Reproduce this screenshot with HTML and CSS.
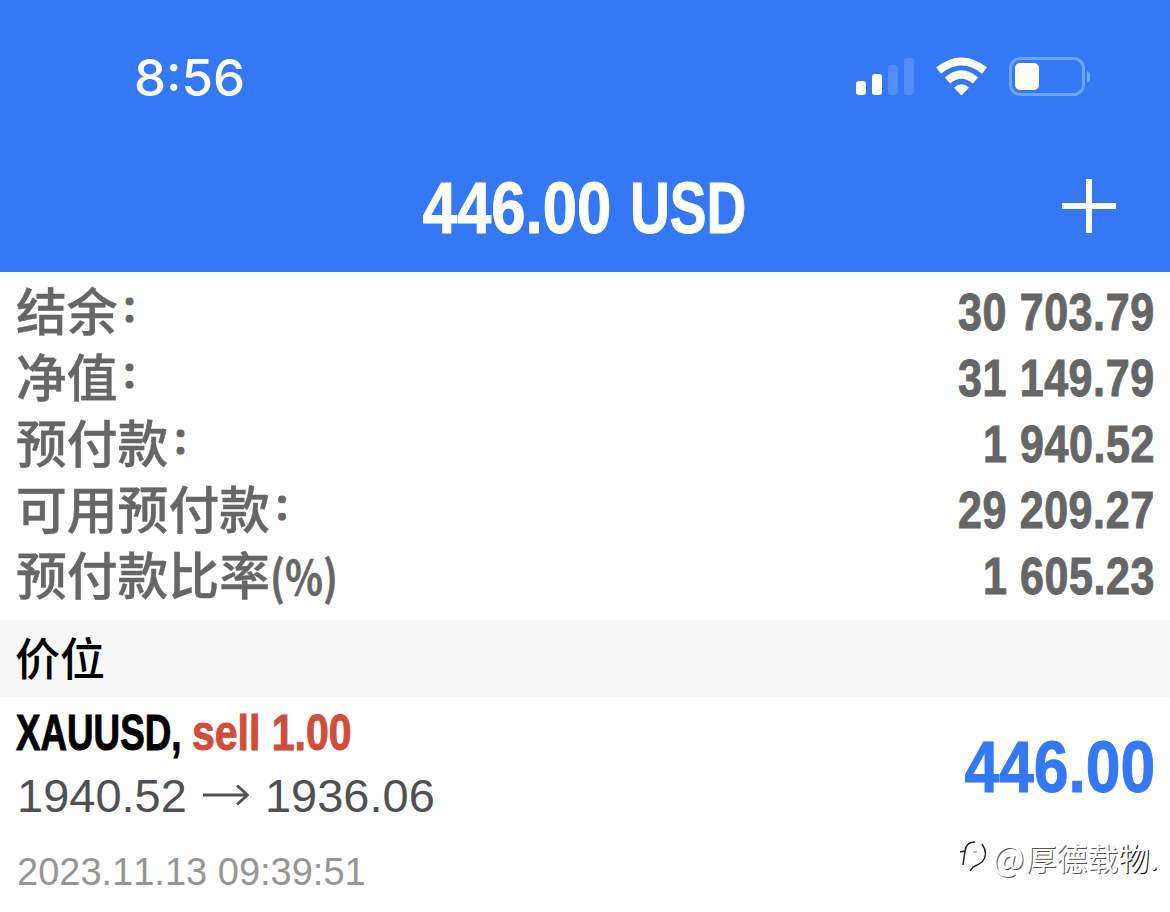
FILE: index.html
```html
<!DOCTYPE html>
<html lang="zh-CN">
<head>
    <meta charset="UTF-8">
    <meta name="viewport" content="width=device-width, initial-scale=1.0">
    <title>446.00 USD</title>
    <link rel="stylesheet" href="styles.css">
</head>
<body>
    <header class="header">
        <div class="status-bar">
            <span class="time">8:56</span>
            <svg class="status-icons" width="240" height="50" viewBox="0 0 240 50">
                <!-- signal -->
                <g fill="#fff">
                    <rect x="6" y="31" width="10" height="14" rx="3"/>
                    <rect x="22" y="24" width="10" height="21" rx="3"/>
                    <rect x="38" y="15" width="10" height="30" rx="3" opacity=".15"/>
                    <rect x="54" y="8" width="10" height="37" rx="3" opacity=".15"/>
                </g>
                <!-- wifi -->
                <g fill="none" stroke="#fff">
                    <path d="M88.500 20.500 Q111.500 2.500 134.500 20.500" stroke-width="8"/>
                    <path d="M97.500 30.500 Q111.500 18.500 125.500 30.500" stroke-width="8"/>
                </g>
                <path d="M104 37.500 Q111.500 31 119 37.500 L112.500 44.500 Q111.500 45.500 110.500 44.500 Z" fill="#fff"/>
                <!-- battery -->
                <rect x="160.500" y="8.500" width="73" height="36" rx="10" fill="none" stroke="#8fc4ff" stroke-width="3" opacity=".6"/>
                <rect x="165" y="13" width="24" height="27" rx="5" fill="#fff"/>
                <path d="M237 21 Q241 23 241 27 Q241 31 237 33 Z" fill="#8fc4ff" opacity=".7"/>
            </svg>
        </div>
        <div class="title-bar">
            <h1 class="title"><span class="amount">446.00</span> <span class="currency">USD</span></h1>
            <svg class="add" width="54" height="54" viewBox="0 0 54 54">
                <path d="M27 0V54M0 27H54" stroke="#fff" stroke-width="6"/>
            </svg>
        </div>
    </header>
    <main>
        <div class="summary">
            <div class="row"><span class="label">结余<span class="colon">：</span></span><span class="value">30 703.79</span></div>
            <div class="row"><span class="label">净值<span class="colon">：</span></span><span class="value">31 149.79</span></div>
            <div class="row"><span class="label">预付款<span class="colon">：</span></span><span class="value">1 940.52</span></div>
            <div class="row"><span class="label">可用预付款<span class="colon">：</span></span><span class="value">29 209.27</span></div>
            <div class="row"><span class="label">预付款比率<span class="unit">(%)</span></span><span class="value">1 605.23</span></div>
        </div>
        <h2 class="section">价位</h2>
        <div class="position">
            <div class="details">
                <div class="symbol"><span class="name">XAUUSD,</span> <span class="sell">sell 1.00</span></div>
                <div class="prices">
                    <span>1940.52</span>
                    <svg class="arrow" width="46" height="22" viewBox="0 0 46 22">
                        <path d="M0 11H45M34 1.500L44.500 11L34 20.500" fill="none" stroke="#505052" stroke-width="2.800"/>
                    </svg>
                    <span>1936.06</span>
                </div>
                <div class="date">2023.11.13 09:39:51</div>
            </div>
            <div class="profit">446.00</div>
        </div>
    </main>
    <div class="watermark">
        <svg width="34" height="42" viewBox="0 0 34 42" fill="none">
            <path d="M2 16L7 15Q8 6 17 6" stroke="#222" stroke-width="1.500"/>
            <path d="M7 15L5 29" stroke="#222" stroke-width="1.500"/>
            <path d="M24 8Q31 18 24 26Q20 29 15 31L12 35" stroke="#222" stroke-width="1.500"/>
            <path d="M15 16H19" stroke="#888"/>
        </svg>
        <span class="at">@</span><span>厚德载<span class="dark">物.</span></span>
    </div>
</body>
</html>
```
FILE: styles.css
```css
* {
    box-sizing: border-box;
}
body {
    margin: 0;
    height: 912px;
    overflow: hidden;
    background: #fff;
    font-family: "Liberation Sans", "Noto Sans CJK SC", sans-serif;
    font-kerning: none;
}
.header {
    height: 272px;
    background: #3478f6;
    color: #fff;
}
.status-bar {
    display: flex;
    justify-content: space-between;
    align-items: center;
    height: 154px;
    padding: 0 80px 0 134px;
}
.status-icons {
    margin-bottom: 5px;
}
.time {
    font-family: Inter, sans-serif;
    font-size: 51px;
    font-weight: 550;
}
.title-bar {
    display: grid;
    grid-template-columns: 1fr auto 1fr;
    align-items: center;
    height: 104px;
    padding-right: 54px;
}
.title {
    grid-column: 2;
    margin: 0;
    padding: 2px 0 0 56px;
    font-size: 73px;
    line-height: 104px;
}
/* condensed headline type */
.amount, .currency, .value, .name, .sell, .profit {
    display: inline-block;
    -webkit-text-stroke: 1px currentColor;
}
.amount {
    margin-right: -2px;
    transform: scaleX(0.845);
    transform-origin: right;
}
.currency {
    transform: scaleX(0.755);
    transform-origin: left;
}
.add {
    justify-self: end;
    margin-bottom: 2px;
}
.summary {
    height: 348px;
    padding: 7px 15px 0 16px;
    color: #666;
}
.row {
    display: flex;
    justify-content: space-between;
    height: 66px;
    line-height: 66px;
}
.label {
    margin-top: -3px;
    font-family: "Noto Sans CJK SC", sans-serif;
    font-size: 50.8px;
    font-weight: 500;
    -webkit-text-stroke: 0.4px currentColor;
}
.colon {
    margin-left: 3px;
    font-size: 36px;
    font-weight: bold;
    line-height: 1;
    vertical-align: 9px;
    -webkit-text-stroke: 1px currentColor;
}
.value {
    font-size: 52px;
    font-weight: bold;
    letter-spacing: 0.7px;
    transform: scaleX(0.827);
    transform-origin: right;
}
.unit {
    display: inline-block;
    font-size: 47px;
    font-weight: bold;
    line-height: 60px;
    transform: scaleX(0.84);
    transform-origin: left;
}
.section {
    height: 77px;
    margin: 0;
    padding-left: 15px;
    background: #f7f7f7;
    font-family: "Noto Sans CJK SC", sans-serif;
    font-size: 45px;
    font-weight: 500;
    line-height: 74px;
}
.position {
    display: flex;
    justify-content: space-between;
    padding: 6px 15px 0 16px;
}
.symbol {
    height: 60px;
    font-size: 50px;
    font-weight: bold;
    line-height: 60px;
}
.name {
    margin-right: -63px;
    transform: scaleX(0.735);
    transform-origin: left;
}
.sell {
    color: #d04c3c;
    transform: scaleX(0.82);
    transform-origin: left;
}
.prices {
    display: flex;
    align-items: center;
    gap: 16px;
    height: 64px;
    padding-left: 1px;
    color: #505052;
    font-size: 47px;
}
.date {
    margin-top: 21px;
    padding-left: 1px;
    color: #969696;
    font-size: 38px;
    line-height: 48px;
}
.profit {
    padding-top: 12px;
    color: #3478f6;
    font-size: 73px;
    font-weight: bold;
    line-height: 104px;
    transform: scaleX(0.855);
    transform-origin: right;
}
/* sits over the bottom right corner of the list */
.watermark {
    position: absolute;
    right: 12px;
    bottom: 34px;
    display: flex;
    align-items: center;
    color: #fff;
    font-family: "Noto Sans CJK SC", sans-serif;
    font-size: 31px;
    line-height: 42px;
    text-shadow: 1px 1px 0 #555;
}
.at {
    margin-right: 1px;
    font-size: 34px;
    line-height: 36px;
}
.dark {
    text-shadow: 1px 1px 0 #000;
}
```
